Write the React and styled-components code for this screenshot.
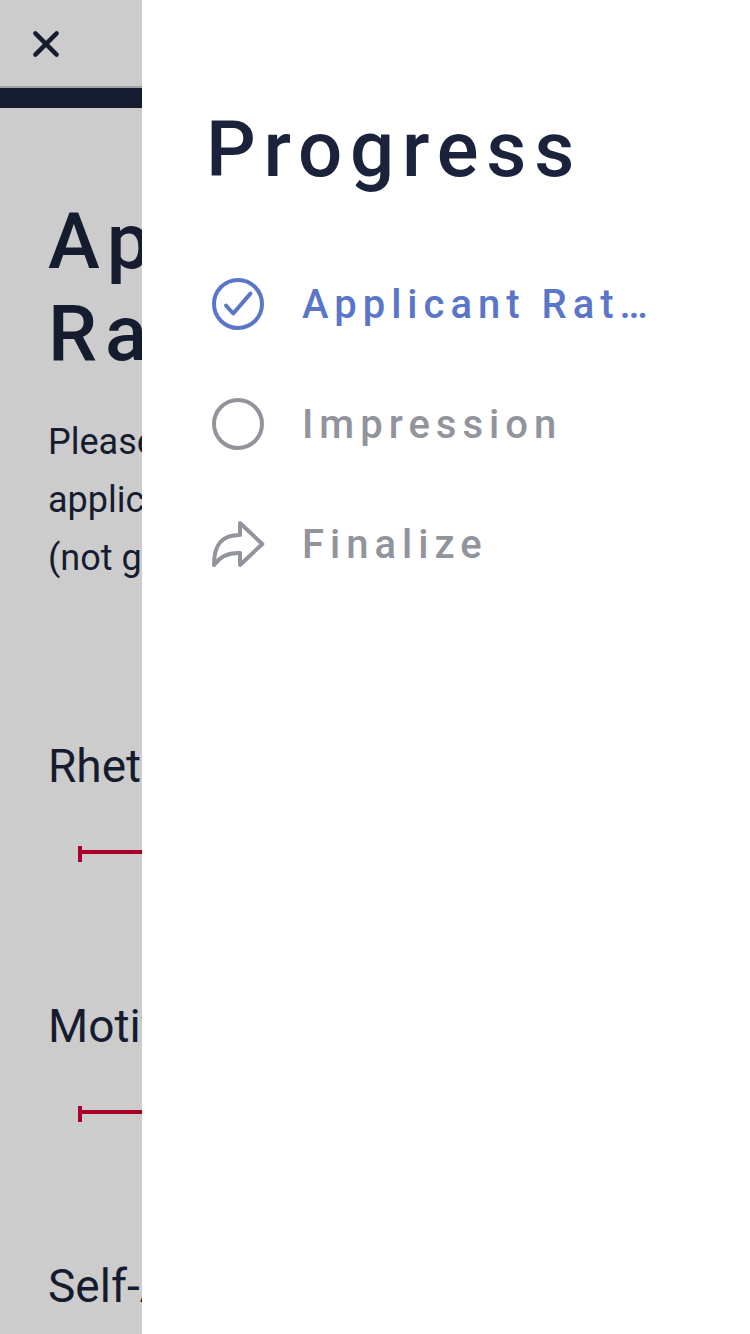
import React from 'react';
import styled, { createGlobalStyle } from 'styled-components';

const Global = createGlobalStyle`
  * { box-sizing: border-box; }
  body { margin: 0; background: #ccc; font-family: Roboto, sans-serif; color: #161c30; overflow: hidden; }
  h1, h2, h3, p, ul { margin: 0; padding: 0; }
`;
const Screen = styled.div`
  display: flex;
  width: 750px;
  height: 1334px;
  overflow: hidden;
`;
const Page = styled.main`
  width: 142px;
  flex: none;
  overflow: hidden;
  background: #ccc;
  white-space: nowrap;
`;
const TopBar = styled.header`
  height: 88px;
  padding: 30px 32px;
  border-bottom: 2px solid #a3a3a3;
  svg { display: block; }
`;
const ProgressStrip = styled.div`
  height: 20px;
  background: #161c30;
`;
const Content = styled.div`
  padding: 88px 0 0 48px;
`;
const Title = styled.h1`
  font-size: 78px;
  line-height: 92px;
  font-weight: 500;
  letter-spacing: 7.8px;
`;
const Intro = styled.p`
  margin-top: 33px;
  font-size: 36px;
  line-height: 58px;
`;
const Question = styled.section`
  height: 260px;
`;
const Questions = styled.div`
  margin-top: 149px;
`;
const Label = styled.h3`
  font-size: 46px;
  line-height: 60px;
  font-weight: 400;
`;
const Slider = styled.div`
  margin: 50px 0 0 30px;
  width: 400px;
  height: 16px;
  border-left: 4px solid #a70029;
  &::before { content: ''; display: block; height: 4px; border-bottom: 4px solid #a70029; }
`;
const Drawer = styled.aside`
  flex: 1;
  min-width: 0;
  background: #fff;
  padding: 104px 98px 0 64px;
`;
const Heading = styled.h2`
  font-size: 78px;
  line-height: 92px;
  font-weight: 500;
  letter-spacing: 7.8px;
  color: #1b233c;
`;
const Steps = styled.ul`
  list-style: none;
  margin-top: 48px;
`;
const Step = styled.li`
  display: flex;
  align-items: center;
  gap: 36px;
  height: 120px;
  color: ${({ $active }) => ($active ? '#5a76c8' : '#92949c')};
  svg { flex: none; }
`;
const StepName = styled.span`
  min-width: 0;
  overflow: hidden;
  text-overflow: ellipsis;
  white-space: nowrap;
  font-size: 40px;
  line-height: 60px;
  padding-top: 2px;
  font-weight: 500;
  letter-spacing: 6px;
`;
const Icon = ({ children }) => (
  <svg width="60" height="60" viewBox="0 0 60 60" fill="none" stroke="currentColor" strokeWidth="4" strokeLinecap="round" strokeLinejoin="round">{children}</svg>
);

export default function App() {
  return (
    <>
      <Global />
      <Screen>
        <Page>
          <TopBar>
            <svg width="28" height="28" viewBox="0 0 28 28" stroke="#161c30" strokeWidth="4.5" strokeLinecap="round"><path d="M3.4 3.4 24.6 24.6M24.6 3.4 3.4 24.6" /></svg>
          </TopBar>
          <ProgressStrip />
          <Content>
            <Title>Applicant<br />Rating</Title>
            <Intro>Please<br />applicant<br />(not g</Intro>
            <Questions>
              {['Rhetoric', 'Motivation', 'Self-Assessment'].map((name) => (
                <Question key={name}><Label>{name}</Label><Slider /></Question>
              ))}
            </Questions>
          </Content>
        </Page>
        <Drawer>
          <Heading>Progress</Heading>
          <Steps>
            <Step $active><Icon><circle cx="32" cy="30" r="24" /><path d="M20 31.5 27.2 39.5 44.4 19.6" /></Icon><StepName>Applicant Rating</StepName></Step>
            <Step><Icon><circle cx="32" cy="30" r="24" /></Icon><StepName>Impression</StepName></Step>
            <Step><Icon><path d="M34 9 56.3 30 34 51V39C22 38.4 14 42.5 8 51C8 29 17 21 34 21Z" /></Icon><StepName>Finalize</StepName></Step>
          </Steps>
        </Drawer>
      </Screen>
    </>
  );
}
